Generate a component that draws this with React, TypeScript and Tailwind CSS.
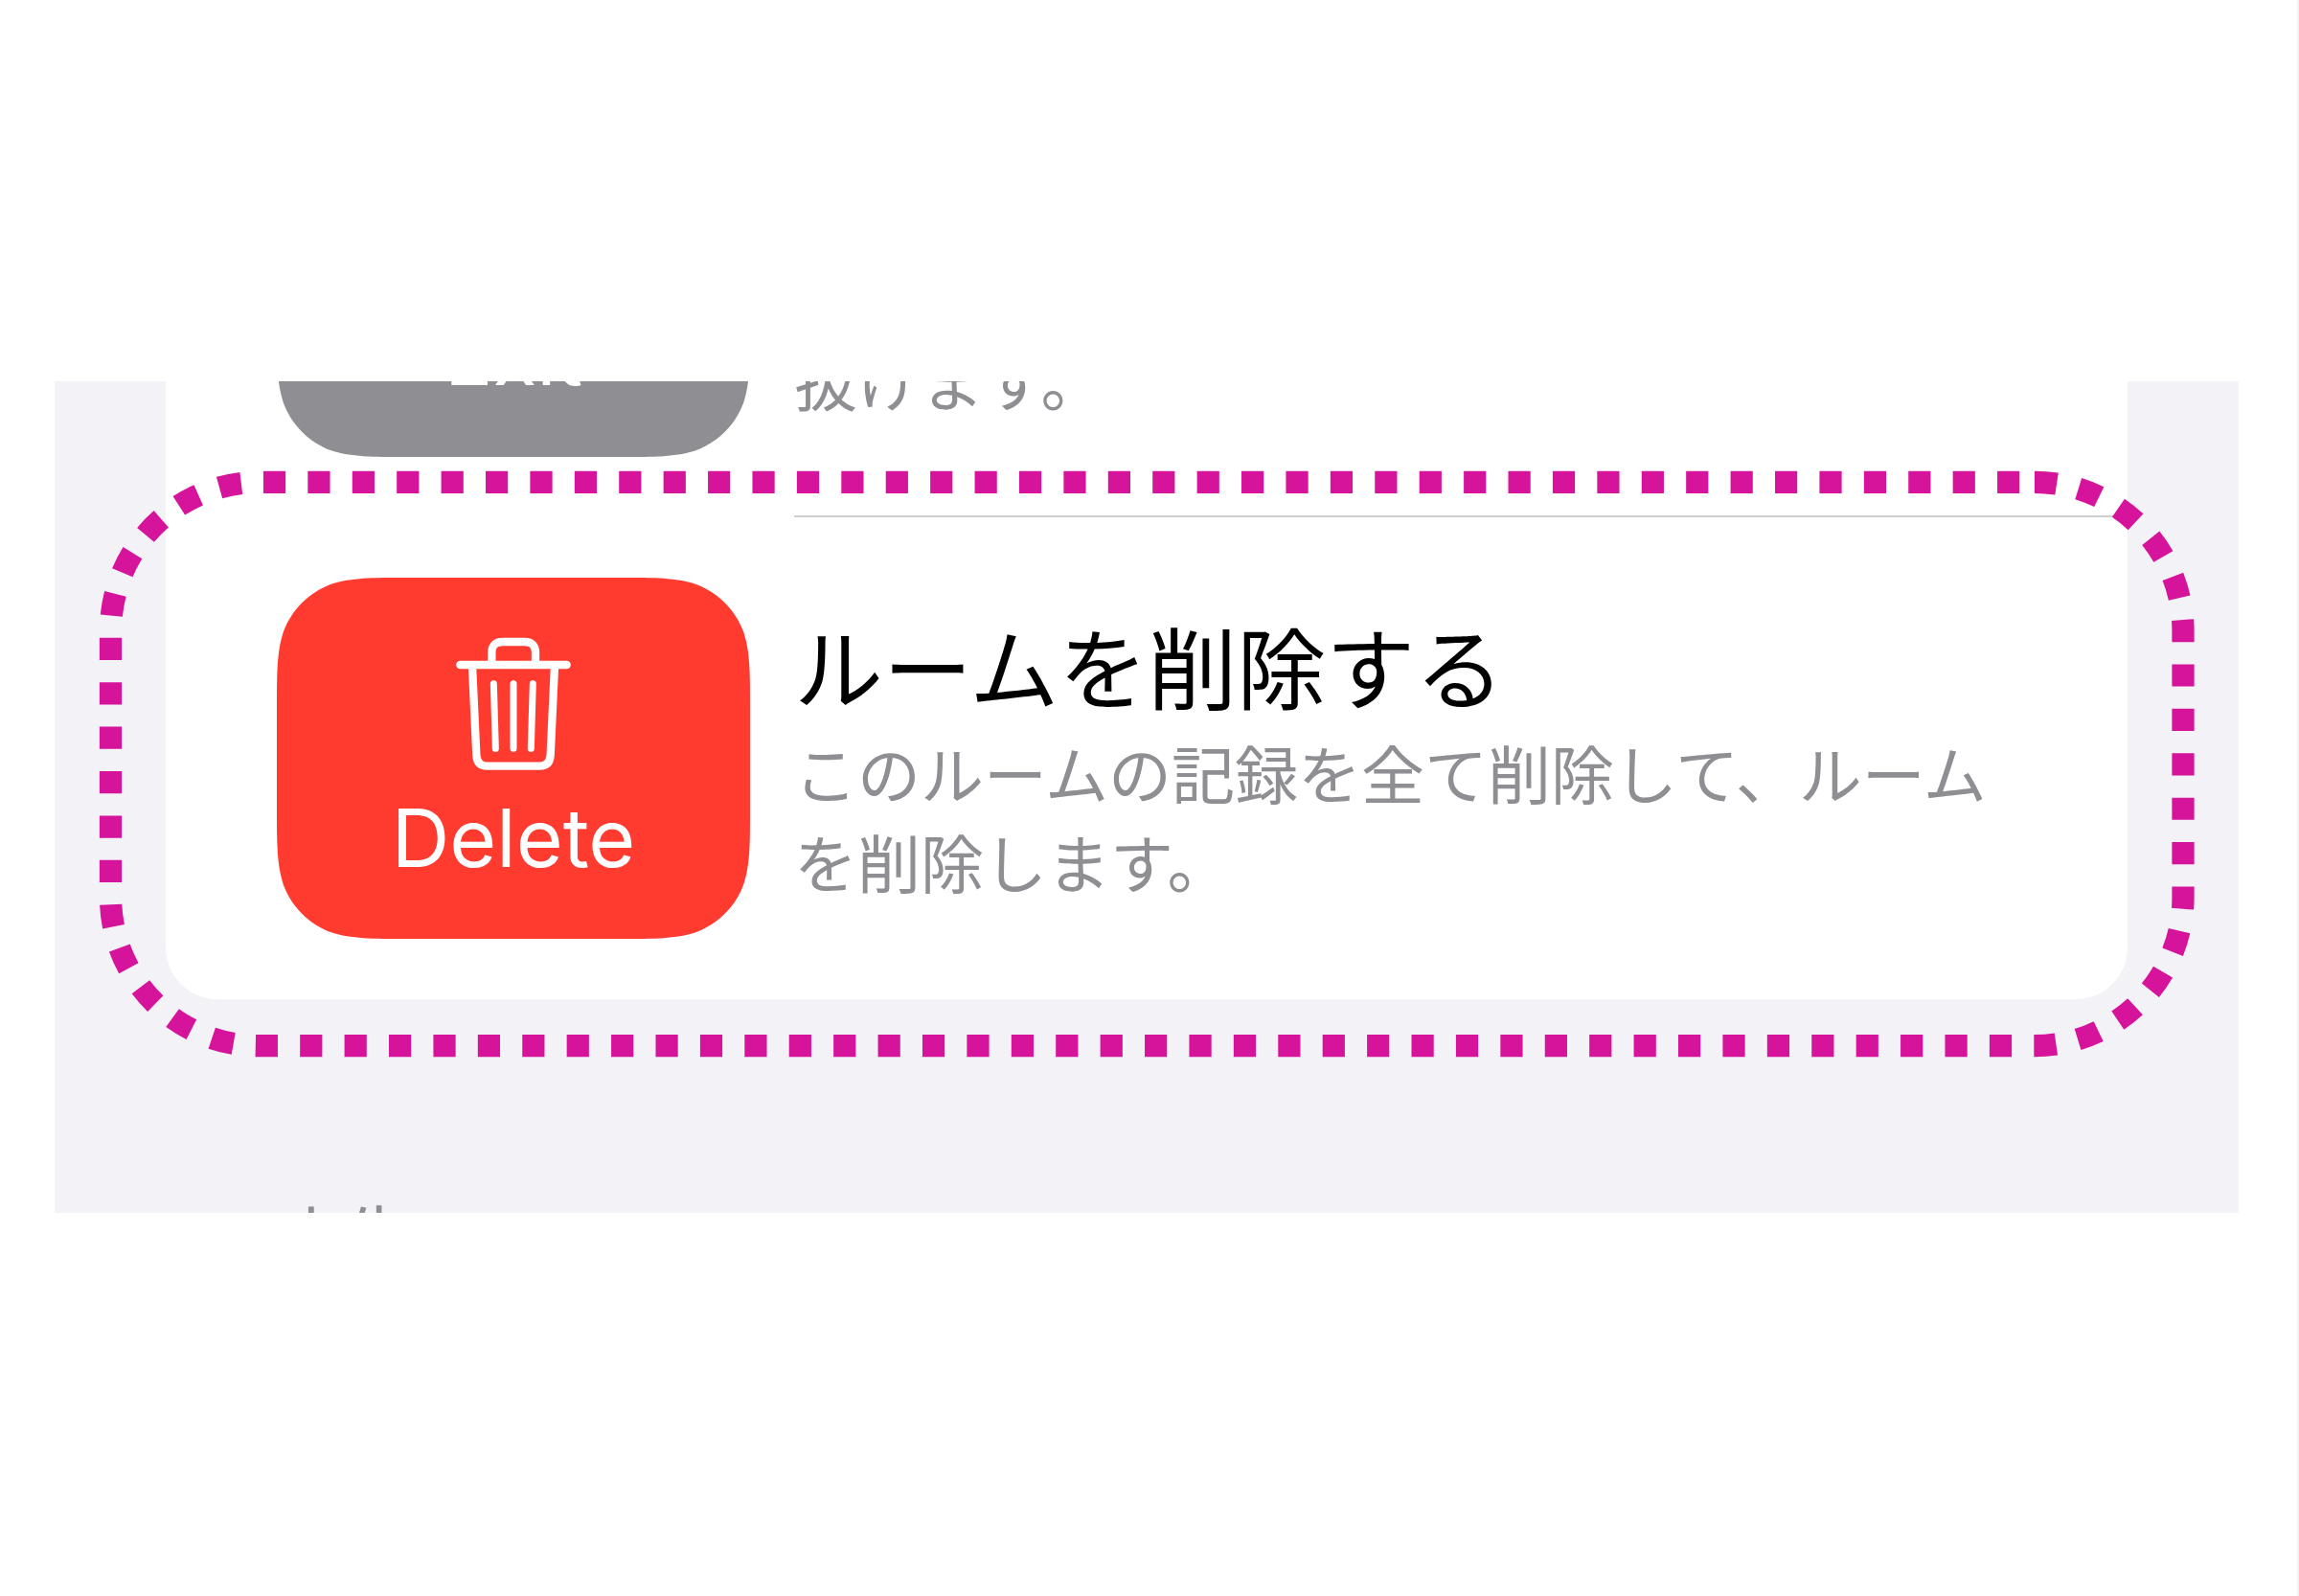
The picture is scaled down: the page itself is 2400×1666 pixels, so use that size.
import { ReactNode } from "react";

const TILE_WIDTH = 494;
const TILE_HEIGHT = 377;

// iOS style continuous corners
const continuousRect = (w: number, h: number, r: number): string => {
  const a = 1.528665 * r;
  const b = 1.088493 * r;
  const c = 0.868407 * r;
  const d = 0.631494 * r;
  const e = 0.074911 * r;
  const f = 0.372824 * r;
  const g = 0.16906 * r;
  return [
    `M${a} 0H${w - a}`,
    `C${w - b} 0 ${w - c} 0 ${w - d} ${e}`,
    `C${w - f} ${g} ${w - g} ${f} ${w - e} ${d}`,
    `C${w} ${c} ${w} ${b} ${w} ${a}V${h - a}`,
    `C${w} ${h - b} ${w} ${h - c} ${w - e} ${h - d}`,
    `C${w - g} ${h - f} ${w - f} ${h - g} ${w - d} ${h - e}`,
    `C${w - c} ${h} ${w - b} ${h} ${w - a} ${h}H${a}`,
    `C${b} ${h} ${c} ${h} ${d} ${h - e}`,
    `C${f} ${h - g} ${g} ${h - f} ${e} ${h - d}`,
    `C0 ${h - c} 0 ${h - b} 0 ${h - a}V${a}`,
    `C0 ${b} 0 ${c} ${e} ${d}`,
    `C${g} ${f} ${f} ${g} ${d} ${e}`,
    `C${c} 0 ${b} 0 ${a} 0Z`,
  ].join("");
};

const TrashIcon = () => (
  <svg viewBox="109 78 360 420" fill="none" stroke="currentColor" strokeWidth="25" strokeLinecap="round" className="h-[140px] w-[120px]" aria-hidden="true">
    <path d="M122 165H456" />
    <path d="M221 162V127Q221 93 255 93H324Q358 93 358 127V162" />
    <path d="M160 168L173 448Q175 482 207 482H371Q403 482 405 448L418 168" />
    <path d="M227 224L233 427M289 224V427M350 224L344 427" strokeWidth="21" />
  </svg>
);

const ExitIcon = () => (
  <svg viewBox="0 0 120 140" fill="none" stroke="currentColor" strokeWidth="8" strokeLinecap="round" strokeLinejoin="round" className="h-[140px] w-[120px]" aria-hidden="true">
    <path d="M70 20H20V120H70M50 70H110M88 48L110 70L88 92" />
  </svg>
);

type ActionRowProps = {
  label: string;
  icon: ReactNode;
  color: string;
  title: string;
  description: string;
};

const ActionRow = ({ label, icon, color, title, description }: ActionRowProps) => (
  <div className="flex items-center gap-[46px] px-[116px] py-[63px]">
    <button type="button" className={`relative flex h-[377px] w-[494px] shrink-0 flex-col items-center gap-5 pt-[62px] text-white ${color}`}>
      <svg viewBox={`0 0 ${TILE_WIDTH} ${TILE_HEIGHT}`} className="absolute inset-0 size-full" aria-hidden="true">
        <path d={continuousRect(TILE_WIDTH, TILE_HEIGHT, 90)} />
      </svg>
      <span className="relative">{icon}</span>
      <span className="relative font-['Inter','Liberation_Sans',sans-serif] text-[84px] leading-[100px]">{label}</span>
    </button>
    <div className="pb-2.5 font-['Noto_Sans_CJK_JP',sans-serif]">
      <h2 className="text-[93px] leading-[130px] text-black">{title}</h2>
      <p className="text-[66px] leading-[93px] text-[#8e8e93]">{description}</p>
    </div>
  </div>
);

const App = () => {
  return (
    <main className="relative min-h-screen border-r-2 border-[#f2f2f2] bg-white pt-[398px] pr-[61px] pl-[57px]">
      <section className="h-[868px] overflow-hidden bg-[#f2f2f7] px-[116px]">
        <div className="-mt-[361px] rounded-b-[54px] bg-white">
          <ActionRow
            label="Exit"
            icon={<ExitIcon />}
            color="fill-[#8e8e93]"
            title="ルームから抜ける"
            description="このルームの記録を残したままルームから抜けます。"
          />
          <div className="-mt-[2px] ml-[656px] h-[2px] bg-[#cfcfd1]" />
          <ActionRow
            label="Delete"
            icon={<TrashIcon />}
            color="fill-[#ff3b30]"
            title="ルームを削除する"
            description="このルームの記録を全て削除して、ルームを削除します。"
          />
        </div>
        <p className="px-[116px] pt-[198px] font-['Noto_Sans_CJK_JP',sans-serif] text-[71px] leading-[93px] text-[#8e8e93]">小生</p>
      </section>
      <svg viewBox="0 0 2400 1666" fill="none" className="pointer-events-none absolute top-0 left-0 w-screen" aria-hidden="true">
        <path
          d="M2124 503.3A155 155 0 0 1 2279 658.3V936.7A155 155 0 0 1 2124 1091.7H270.5A155 155 0 0 1 115.5 936.7V658.3A155 155 0 0 1 270.5 503.3Z"
          stroke="#d6139b"
          strokeWidth="23.2"
          strokeDasharray="23.207 23.207"
        />
      </svg>
    </main>
  );
};

export default App;
